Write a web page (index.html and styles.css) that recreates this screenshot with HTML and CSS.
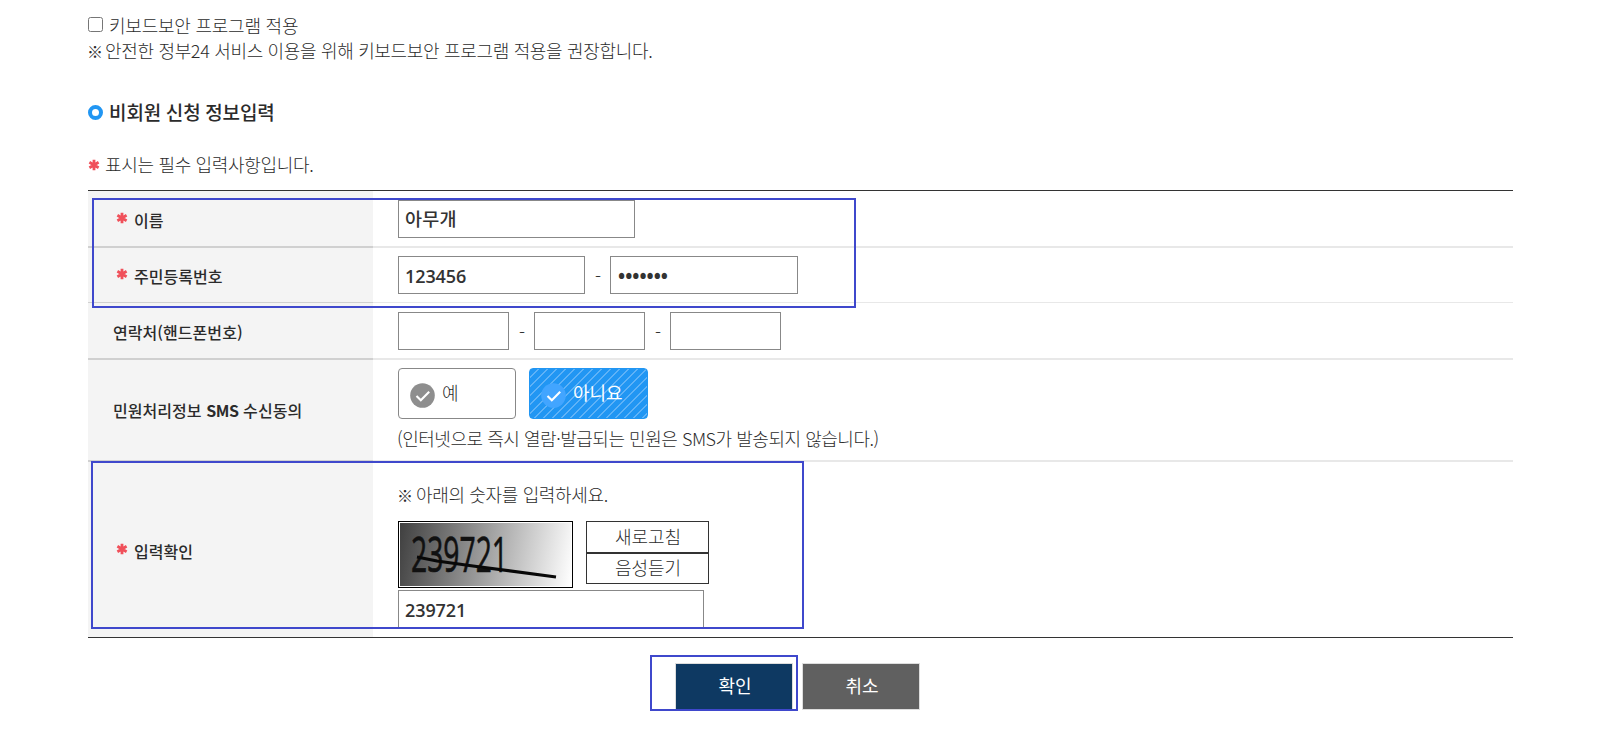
FILE: index.html
```html
<!DOCTYPE html>
<html lang="ko">
<head>
    <meta charset="UTF-8">
    <meta name="viewport" content="width=device-width, initial-scale=1.0">
    <title>비회원 신청 정보입력</title>
    <link rel="stylesheet" href="styles.css">
</head>
<body>
    <!-- shared icon shapes -->
    <svg class="defs" width="0" height="0">
        <symbol id="star" viewBox="0 0 12 12">
            <path d="M6 .8v10.4M1.4 3.3l9.2 5.4M10.6 3.3L1.4 8.7" stroke="#f0505a" stroke-width="2.8"/>
        </symbol>
        <symbol id="check" viewBox="0 0 25 25">
            <circle cx="12.5" cy="12.5" r="12.3"/>
            <path d="M6.5 13l4.3 4.3 8.4-8.5" fill="none" stroke="#fff" stroke-width="2.1"/>
        </symbol>
    </svg>

    <main>
        <div class="security">
            <label class="security-check"><input type="checkbox"><span>키보드보안 프로그램 적용</span></label>
            <p class="security-note"><span class="mark">※</span>안전한 정부24 서비스 이용을 위해 키보드보안 프로그램 적용을 권장합니다.</p>
        </div>

        <h2><span class="bullet"></span><span class="title-text">비회원 신청 정보입력</span></h2>
        <p class="required-note"><svg class="star"><use href="#star"/></svg><span>표시는 필수 입력사항입니다.</span></p>

        <form>
            <div class="table">
                <div class="row row-name">
                    <div class="th"><svg class="star"><use href="#star"/></svg><span>이름</span></div>
                    <div class="td"><input type="text" class="name" value="아무개"></div>
                </div>
                <div class="row row-number">
                    <div class="th"><svg class="star"><use href="#star"/></svg><span>주민등록번호</span></div>
                    <div class="td">
                        <input type="text" class="number" value="123456"><span class="dash">-</span><input type="password" class="number-back" value="1234567">
                    </div>
                </div>
                <div class="row row-phone">
                    <div class="th"><span>연락처(핸드폰번호)</span></div>
                    <div class="td">
                        <input type="text" class="phone"><span class="dash">-</span><input type="text" class="phone"><span class="dash">-</span><input type="text" class="phone">
                    </div>
                </div>
                <div class="row row-sms">
                    <div class="th"><span>민원처리정보 <b>SMS</b> 수신동의</span></div>
                    <div class="td">
                        <div class="choices">
                            <button type="button" class="choice"><svg class="check"><use href="#check"/></svg><span>예</span></button>
                            <button type="button" class="choice selected"><svg class="check"><use href="#check"/></svg><span>아니요</span></button>
                        </div>
                        <p class="sms-note">(인터넷으로 즉시 열람·발급되는 민원은 SMS가 발송되지 않습니다.)</p>
                    </div>
                </div>
                <div class="row row-captcha">
                    <div class="th"><svg class="star"><use href="#star"/></svg><span>입력확인</span></div>
                    <div class="td">
                        <p class="captcha-note"><span class="mark">※</span>아래의 숫자를 입력하세요.</p>
                        <div class="captcha">
                            <svg class="captcha-image" viewBox="0 0 171 63">
                                <text x="11" y="49" textLength="97" lengthAdjust="spacingAndGlyphs">239721</text>
                                <path d="M17 34l20 4 36 5 83 11" fill="none" stroke="#080808" stroke-width="3.2"/>
                            </svg>
                            <div class="captcha-buttons">
                                <button type="button">새로고침</button>
                                <button type="button">음성듣기</button>
                            </div>
                        </div>
                        <input type="text" class="answer" value="239721">
                    </div>
                </div>
            </div>

            <div class="actions">
                <button type="button" class="confirm">확인</button>
                <button type="button" class="cancel">취소</button>
            </div>
        </form>
    </main>

    <!-- guide boxes over the form -->
    <div class="guide guide-person"></div>
    <div class="guide guide-captcha"></div>
    <div class="guide guide-confirm"></div>
</body>
</html>
```
FILE: styles.css
```css
* {
    box-sizing: border-box;
}

body {
    position: relative;
    margin: 0;
    height: 734px;
    overflow: hidden;
    background-color: #fff;
    color: #2b2b2b;
    font-family: "Noto Sans CJK KR", sans-serif;
    font-size: 18px;
    font-weight: 300;
}

main {
    width: 1425px;
    margin-left: 88px;
    padding-top: 12px;
}

p, h2 {
    margin: 0;
    white-space: nowrap;
}

.defs {
    position: absolute;
}

.mark {
    display: inline-block;
    margin-left: -1px;
    font-size: 16px;
    line-height: 20px;
    letter-spacing: 0;
}

.security {
    line-height: 25px;
}

.security-check {
    display: flex;
    align-items: center;
    height: 25px;
    letter-spacing: -0.23px;
}

.security-check span {
    padding-top: 1px;
}

.security-check input {
    width: 15px;
    height: 15px;
    margin: 0 6px 0 0;
}

.security-note {
    padding-top: 1px;
    letter-spacing: -0.33px;
}

.security-note .mark {
    width: 18px;
}

h2 {
    display: flex;
    align-items: center;
    height: 30px;
    margin-top: 34px;
    font-size: 19px;
    font-weight: 500;
    letter-spacing: -0.1px;
    word-spacing: -0.6px;
}

.title-text {
    padding-bottom: 1px;
}

.bullet {
    width: 15px;
    height: 15px;
    margin-right: 6px;
    border: 4px solid #2196f3;
    border-radius: 50%;
}

.required-note {
    display: flex;
    align-items: center;
    height: 30px;
    margin-top: 23px;
    letter-spacing: -0.33px;
}

.star {
    width: 12px;
    height: 12px;
    flex: none;
}

.required-note .star {
    margin-right: 5px;
}

.required-note span {
    padding-bottom: 2px;
}

/* form table */
.table {
    margin-top: 10px;
    border-top: 1px solid #333;
    border-bottom: 1px solid #333;
}

.row {
    display: flex;
}

.th {
    display: flex;
    align-items: center;
    width: 285px;
    padding-top: 2px;
    padding-left: 25px;
    background-color: #f4f4f4;
    border-bottom: 2px solid #d0d0d0;
    font-size: 16px;
    font-weight: 500;
    letter-spacing: 0.05px;
    white-space: nowrap;
}

.th .star {
    margin: -4px 6px 0 3px;
}

.th b {
    font-weight: 700;
    letter-spacing: -0.4px;
}

.td {
    flex: 1;
    padding: 9px 0 0 25px;
    border-bottom: 2px solid #e8e8e8;
}

.row-name {
    height: 57px;
}

.row-number {
    height: 55px;
}

.row-number .th,
.row-number .td {
    border-bottom-width: 1px;
}

.row-number .td,
.row-phone .td {
    display: flex;
    padding-top: 8px;
}

.row-phone {
    height: 57px;
}

.row-phone .td {
    padding-top: 9px;
}

.row-sms {
    height: 102px;
}

.row-sms .th {
    padding-top: 0;
}

.row-sms .td {
    padding-top: 8px;
}

.row-captcha {
    height: 175px;
}

.row-captcha .th,
.row-captcha .td {
    border-bottom: none;
}

input[type="text"],
input[type="password"] {
    display: block;
    height: 38px;
    padding: 1px 6px 0;
    border: 1px solid #888;
    border-radius: 0;
    background-color: #fff;
    color: #333;
    font-family: "Open Sans", "Noto Sans CJK KR", sans-serif;
    font-size: 18px;
    font-weight: 600;
    letter-spacing: -0.1px;
}

input[type="text"].name {
    width: 237px;
    padding: 0 6px 2px;
    font-family: "Noto Sans CJK KR", sans-serif;
    font-size: 18.5px;
    font-weight: 500;
    letter-spacing: 0.2px;
}

input.number {
    width: 187px;
}

input[type="password"].number-back {
    width: 188px;
    padding-left: 7px;
    font-size: 19px;
    font-weight: 700;
    letter-spacing: 0;
}

input.phone {
    width: 111px;
}

input.answer {
    width: 306px;
    margin-top: 2px;
}

.dash {
    width: 25px;
    padding-left: 1px;
    line-height: 38px;
    text-align: center;
}

/* yes / no choice */
.choices {
    display: flex;
    gap: 13px;
}

.choice {
    display: flex;
    align-items: flex-start;
    width: 118px;
    height: 51px;
    padding: 12px 0 0 11px;
    border: 1px solid #888;
    border-radius: 4px;
    background-color: #fff;
    color: #2b2b2b;
    font: inherit;
    line-height: 22px;
}

.choice.selected {
    width: 119px;
    border-color: #2196f3;
    background: repeating-linear-gradient(135deg, #2196f3 0 5px, #5fb2f7 5px 6.4px);
    color: #fff;
    font-weight: 400;
}

.check {
    width: 25px;
    height: 25px;
    margin: 2px 7px 0 0;
    fill: #8e8e8e;
}

.selected .check {
    fill: #42a5ff;
}

.sms-note {
    margin-top: 6px;
    margin-left: -1px;
    line-height: 26px;
    letter-spacing: -0.47px;
}

/* captcha */
.captcha-note {
    margin-top: 10px;
    line-height: 26px;
    letter-spacing: -0.35px;
}

.captcha-note .mark {
    width: 19px;
}

.captcha {
    display: flex;
    gap: 13px;
    margin-top: 14px;
}

.captcha-image {
    width: 175px;
    height: 67px;
    padding: 1px;
    border: 1px solid #000;
    background: linear-gradient(100deg, #404040, #fff) content-box;
    overflow: visible;
}

.captcha-image text {
    fill: #111;
    stroke: #111;
    stroke-width: 0.7px;
    font-family: "Open Sans", sans-serif;
    font-size: 50px;
    font-weight: 400;
}

.captcha-buttons {
    display: flex;
    flex-direction: column;
}

.captcha-buttons button {
    width: 123px;
    height: 32px;
    padding: 0 0 2px 1px;
    border: 1px solid #333;
    background-color: #fff;
    color: #2b2b2b;
    font: inherit;
    line-height: 26px;
}

.captcha-buttons button + button {
    height: 31px;
    padding-bottom: 3px;
}

/* bottom buttons */
.actions {
    display: flex;
    gap: 9px;
    margin: 25px 0 0 587px;
}

.actions button {
    width: 118px;
    height: 47px;
    padding: 0 0 4px 2px;
    border: 1px solid #ddd;
    background-color: #606060;
    color: #fff;
    font: inherit;
    font-weight: 400;
}

.actions .confirm {
    background-color: #0e3962;
}

.guide {
    position: absolute;
    border: 2px solid #3f48cc;
    pointer-events: none;
}

.guide-person {
    left: 92px;
    top: 198px;
    width: 764px;
    height: 110px;
}

.guide-captcha {
    left: 91px;
    top: 461px;
    width: 713px;
    height: 168px;
}

.guide-confirm {
    left: 650px;
    top: 655px;
    width: 148px;
    height: 56px;
}
```
